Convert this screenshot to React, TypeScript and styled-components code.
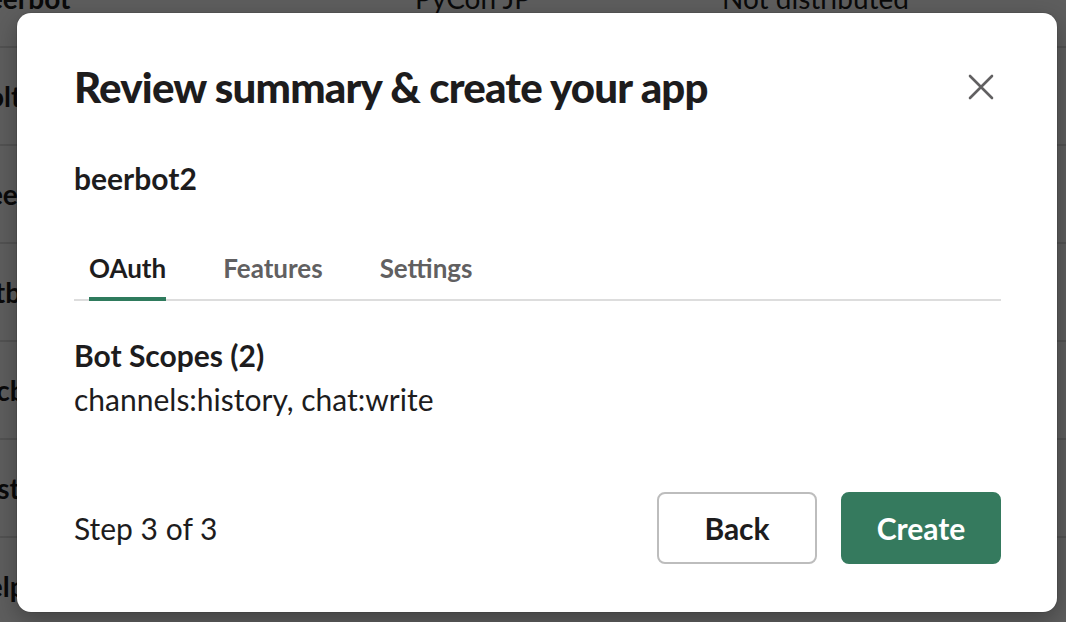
import styled, { createGlobalStyle } from "styled-components";

const GlobalStyle = createGlobalStyle`
  html, body {
    margin: 0;
    padding: 0;
    width: 100%;
    height: 100%;
    overflow: hidden;
    font-family: Lato, "Noto Sans", sans-serif;
    color: #1d1c1d;
    background: #fff;
  }
`;

const apps = [
  { name: "beerbot", team: "PyCon JP", status: "Not distributed" },
  { name: "boltbot", team: "PyCon JP", status: "Not distributed" },
  { name: "beebot", team: "PyCon JP", status: "Not distributed" },
  { name: "tstbot", team: "PyCon JP", status: "Not distributed" },
  { name: "arcbot", team: "PyCon JP", status: "Not distributed" },
  { name: "testapp", team: "PyCon JP", status: "Not distributed" },
  { name: "helper", team: "PyCon JP", status: "Not distributed" },
];

const Page = styled.div`
  position: relative;
  width: 1066px;
  height: 622px;
  overflow: hidden;
`;

const Table = styled.div`
  display: flex;
  flex-direction: column;
  margin-top: -50px;
`;

const Row = styled.div`
  display: grid;
  grid-template-columns: 443px 307px 1fr;
  align-items: center;
  height: 98px;
  box-sizing: border-box;
  border-bottom: 2px solid #dddddd;
  margin-left: -28px;
  font-size: 28px;
`;

const Name = styled.div`
  font-weight: 700;
`;

const Cell = styled.div`
  font-weight: 400;
`;

const Overlay = styled.div`
  position: absolute;
  inset: 0;
  background: rgba(0, 0, 0, 0.63);
`;

const Modal = styled.div`
  position: absolute;
  left: 17px;
  top: 13px;
  width: 1040px;
  height: 599px;
  box-sizing: border-box;
  background: #fff;
  border-radius: 14px;
  box-shadow: 0 0 0 1px rgba(0, 0, 0, 0.08), 0 8px 24px rgba(0, 0, 0, 0.3);
  padding: 0 56px 48px 57px;
  display: flex;
  flex-direction: column;
`;

const Header = styled.div`
  display: flex;
  align-items: center;
  justify-content: space-between;
  height: 148px;
`;

const Title = styled.h1`
  margin: 0;
  font-size: 42px;
  font-weight: 900;
  letter-spacing: -0.8px;
  color: #1d1c1d;
`;

const Close = styled.button`
  width: 40px;
  height: 40px;
  border: none;
  background: transparent;
  padding: 0;
  display: flex;
  align-items: center;
  justify-content: center;
  cursor: pointer;
`;

const AppName = styled.div`
  font-size: 30px;
  font-weight: 700;
  margin-top: -1px;
`;

const Tabs = styled.div`
  display: flex;
  margin-top: 56px;
  border-bottom: 2px solid #dddddd;
  padding-left: 15px;
`;

const Tab = styled.div<{ $active?: boolean }>`
  font-size: 26px;
  font-weight: 700;
  color: ${(p) => (p.$active ? "#1d1c1d" : "#616061")};
  padding: 0 0 13px;
  margin-right: 57px;
  margin-bottom: -2px;
  border-bottom: 4px solid ${(p) => (p.$active ? "#2f7b5d" : "transparent")};
`;

const SectionTitle = styled.div`
  font-size: 30px;
  font-weight: 700;
  margin-top: 36px;
`;

const SectionText = styled.div`
  font-size: 30px;
  font-weight: 400;
  margin-top: 8px;
`;

const Footer = styled.div`
  margin-top: auto;
  display: flex;
  align-items: center;
  justify-content: space-between;
`;

const Step = styled.div`
  font-size: 30px;
  font-weight: 400;
`;

const Buttons = styled.div`
  display: flex;
  gap: 24px;
`;

const Button = styled.button<{ $primary?: boolean }>`
  width: 160px;
  height: 72px;
  box-sizing: border-box;
  border-radius: 8px;
  font-family: Lato, "Noto Sans", sans-serif;
  font-size: 30px;
  font-weight: 700;
  cursor: pointer;
  border: 2px solid ${(p) => (p.$primary ? "#357a5e" : "#bdbdbd")};
  background: ${(p) => (p.$primary ? "#357a5e" : "#fff")};
  color: ${(p) => (p.$primary ? "#fff" : "#1d1c1d")};
`;

export default function App() {
  return (
    <Page>
      <GlobalStyle />
      <Table>
        {apps.map((a) => (
          <Row key={a.name}>
            <Name>{a.name}</Name>
            <Cell>{a.team}</Cell>
            <Cell>{a.status}</Cell>
          </Row>
        ))}
      </Table>
      <Overlay />
      <Modal>
        <Header>
          <Title>Review summary &amp; create your app</Title>
          <Close aria-label="Close">
            <svg width="26" height="26" viewBox="0 0 26 26">
              <path d="M2 2L24 24M24 2L2 24" stroke="#616061" strokeWidth="2.6" strokeLinecap="round" />
            </svg>
          </Close>
        </Header>
        <AppName>beerbot2</AppName>
        <Tabs>
          <Tab $active>OAuth</Tab>
          <Tab>Features</Tab>
          <Tab>Settings</Tab>
        </Tabs>
        <SectionTitle>Bot Scopes (2)</SectionTitle>
        <SectionText>channels:history, chat:write</SectionText>
        <Footer>
          <Step>Step 3 of 3</Step>
          <Buttons>
            <Button>Back</Button>
            <Button $primary>Create</Button>
          </Buttons>
        </Footer>
      </Modal>
    </Page>
  );
}
